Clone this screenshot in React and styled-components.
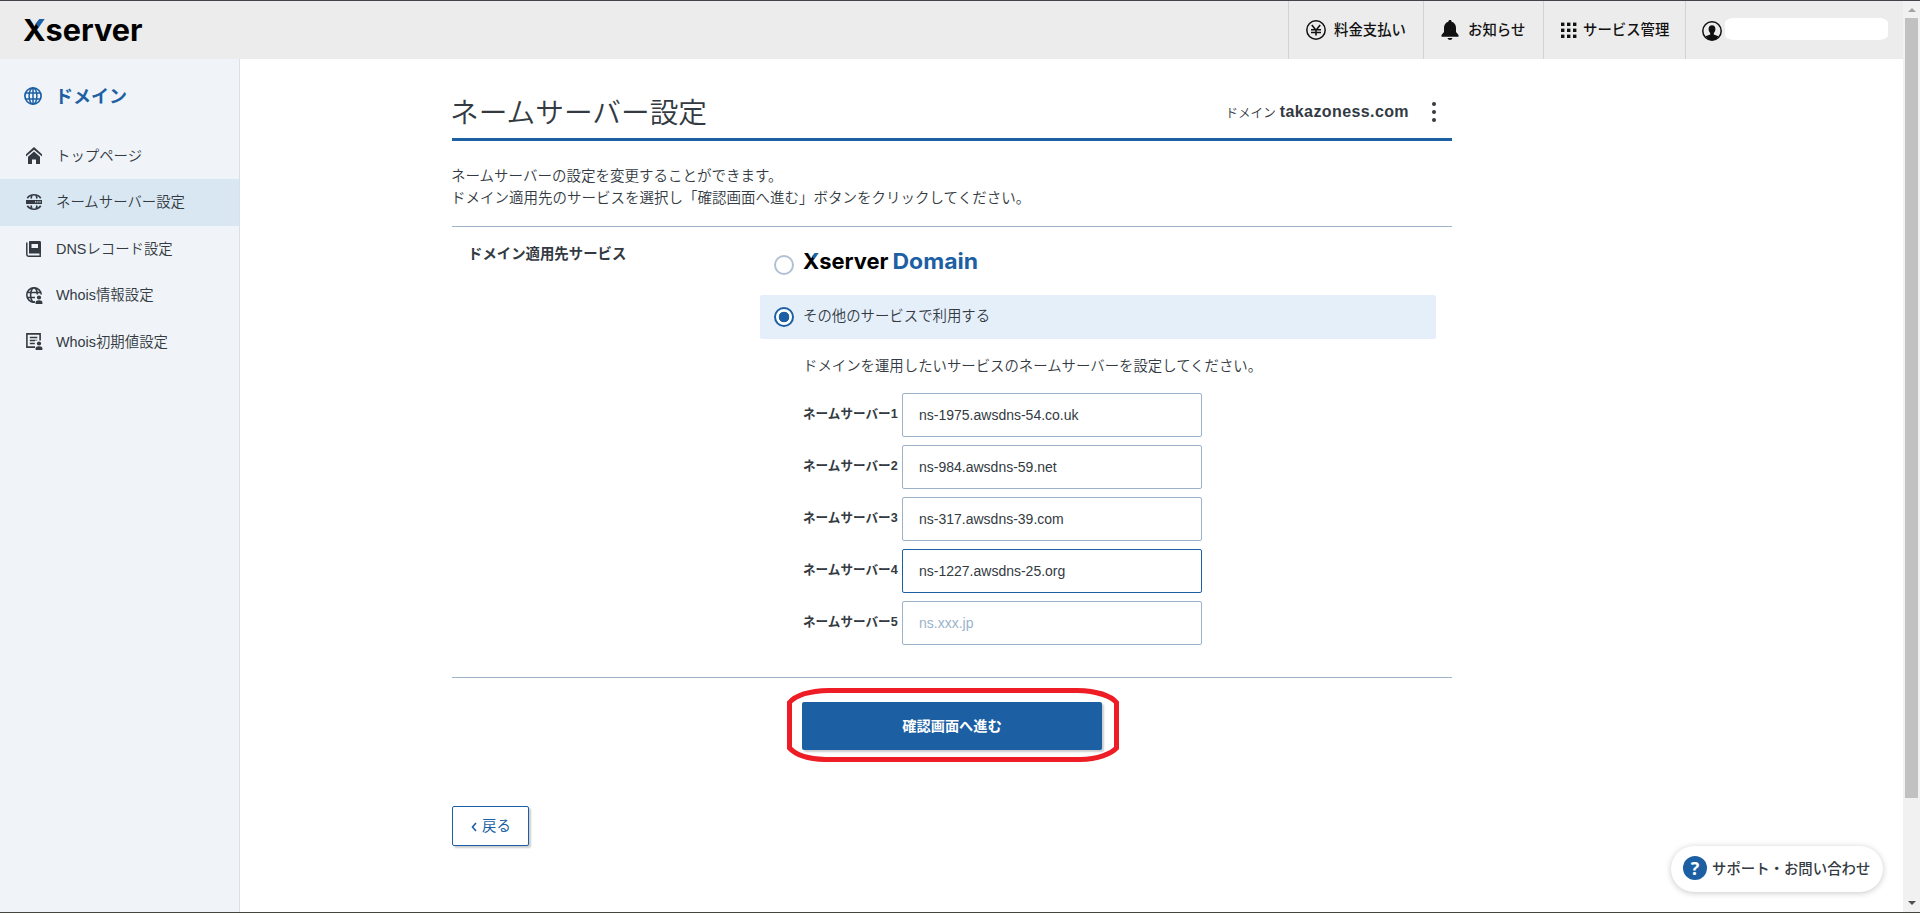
import React, { useState } from 'react';
import styled, { createGlobalStyle, css } from 'styled-components';

const GlobalStyle = createGlobalStyle`
  * {
    box-sizing: border-box;
  }

  body {
    margin: 0;
    height: 913px;
    overflow: hidden;
    background: #fff;
    color: #333a42;
    font-family: 'Liberation Sans', 'Noto Sans CJK JP', sans-serif;
    font-size: 14.4px;
    font-weight: 350;
  }
`;

const YenIcon = () => (
  <svg width="20" height="20" viewBox="0 0 20 20" fill="none" stroke="#111">
    <circle cx="10" cy="10" r="9.2" strokeWidth="1.5" />
    <path d="M5.8 5l4.2 5.2L14.2 5M10 10v5.6M5 9.7h10M5 12.5h10" strokeWidth="1.6" />
  </svg>
);

const BellIcon = () => (
  <svg width="18" height="20" viewBox="0 0 18 20" fill="#111">
    <path d="M9 0c1 0 1.6.7 1.6 1.7C13.400 2.500 15 4.800 15 7.600V12l2.500 3v1.700H.5V15L3 12V7.600c0-2.800 1.600-5.100 4.400-5.900C7.400.7 8 0 9 0z" />
    <path d="M6.500 18h5c-.4 1.200-1.300 1.900-2.500 1.900S6.900 19.200 6.500 18z" />
  </svg>
);

const GridIcon = () => (
  <svg width="16" height="16" viewBox="0 0 16 16" fill="#111">
    {[1, 7, 13].map((y) =>
      [0, 6, 12].map((x) => <rect key={`${x}-${y}`} x={x} y={y - 0.4} width="3.4" height="3.4" />)
    )}
  </svg>
);

const UserIcon = () => (
  <svg width="20" height="22" viewBox="0 -2 20 22">
    <circle cx="10" cy="10" r="9.2" fill="none" stroke="#111" strokeWidth="1.5" />
    <path
      d="M10 4.300c2.200 0 3.400 1.500 3.400 3.700 0 1.700-.7 3.100-1.600 3.900v1.500l4.600 1.900C15 17.800 12.700 19.300 10 19.300S5 17.800 3.600 15.300l4.600-1.900v-1.500C7.300 11.100 6.600 9.700 6.600 8c0-2.200 1.200-3.700 3.400-3.700z"
      fill="#111"
    />
  </svg>
);

const GlobeIcon = () => (
  <svg width="18" height="18" viewBox="0 0 18 18" fill="none" stroke="#1c5fa3" strokeWidth="1.5">
    <circle cx="9" cy="9" r="8.100" strokeWidth="1.700" />
    <ellipse cx="9" cy="9" rx="3.900" ry="8.100" />
    <path d="M9 1v16M1.800 6h14.400M1.800 12h14.400" />
  </svg>
);

const HomeIcon = () => (
  <svg width="16" height="17" viewBox="0 0 16 17" fill="#333a42">
    <path d="M8 0l8 7.200v2.400L8 2.800 0 9.600V7.200z" />
    <path d="M8 4.600l6 5.200V17h-4v-4.500H6V17H2V9.800z" />
  </svg>
);

const NameServerIcon = () => (
  <svg width="16" height="16" viewBox="0 0 16 16">
    <path
      d="M1.300 4.200C2.700 2 5.100.8 8 .8s5.300 1.200 6.700 3.400M1.300 11.800C2.700 14 5.100 15.200 8 15.200s5.300-1.200 6.700-3.400M5 4.500L6 .9M11 4.500L10 .9M5 11.500l1 3.600M11 11.500l-1 3.600"
      fill="none"
      stroke="#333a42"
      strokeWidth="1.600"
    />
    <path d="M0 6h16v4H0z" fill="#333a42" />
    <path d="M9 7.300h1.300v1.300H9zM11.200 7.300h1.300v1.300h-1.300zM13.400 7.300h1.300v1.300h-1.300z" fill="#dae7f2" />
  </svg>
);

const RecordIcon = () => (
  <svg width="16" height="16" viewBox="0 0 16 16">
    <path d="M4 0h9.500C14.500 0 15 .6 15 1.500V12.500H3V1c0-.6.400-1 1-1z" fill="#333a42" />
    <path d="M5.500 3h6.500v4H5.500z" fill="#f0f4f8" />
    <path d="M.8 1.500v12c0 1 .6 1.700 1.700 1.700H14.200V12" fill="none" stroke="#333a42" strokeWidth="1.500" />
  </svg>
);

const Person = () => (
  <>
    <path d="M9 7.500h8V17H9z" fill="#f0f4f8" />
    <circle cx="13" cy="10.500" r="2.100" fill="#333a42" />
    <path d="M9.600 17v-1.500c0-1.500 1.300-2.300 3.400-2.300s3.400.8 3.400 2.300V17z" fill="#333a42" />
  </>
);

const WhoisIcon = () => (
  <svg width="17" height="17" viewBox="0 0 17 17">
    <g fill="none" stroke="#333a42" strokeWidth="1.600">
      <circle cx="8" cy="8" r="7.200" />
      <ellipse cx="8" cy="8" rx="3.400" ry="7.200" />
      <path d="M1.300 5.500h13.400M1.300 10.500h13.400" />
    </g>
    <Person />
  </svg>
);

const WhoisDefaultIcon = () => (
  <svg width="17" height="17" viewBox="0 0 17 17">
    <path
      d="M.9.900h13.200v13.200H.9zM3.800 4.500h7.500M3.800 7.500h7.500M3.800 10.500h5"
      fill="none"
      stroke="#333a42"
      strokeWidth="1.600"
    />
    <Person />
  </svg>
);

const XserverLogo = () => (
  <LogoSvg width="120" height="26" viewBox="0 0 120 26">
    <text x="-1" y="23" fontSize="30" textLength="119.500" lengthAdjust="spacingAndGlyphs">Xserver</text>
    <path d="M14.500 0h7l-.6 1.200-5.300 7.600-4-4.200z" fill="#ececec" />
    <path d="M11.600 5.400L15.300 1.100h5.400l-6 8.300z" fill="#1c5fa3" />
  </LogoSvg>
);

const DomainLogo = () => (
  <LogoSvg width="176" height="20" viewBox="0 0 176 20">
    <text x="-1" y="16" fontSize="22" textLength="85.500" lengthAdjust="spacingAndGlyphs">Xserver</text>
    <path d="M10.200-.5h5.200l-.7.800-3.800 5.500-2.900-3z" fill="#fff" />
    <path d="M8 3.300L10.700.1h3.900l-4.300 6.100z" fill="#1c5fa3" />
    <text x="88.500" y="16" fontSize="22" fill="#1c5fa3" textLength="85.500" lengthAdjust="spacingAndGlyphs">Domain</text>
  </LogoSvg>
);

const menuItems = [
  { label: 'トップページ', icon: <HomeIcon /> },
  { label: 'ネームサーバー設定', icon: <NameServerIcon />, active: true },
  { label: 'DNSレコード設定', icon: <RecordIcon /> },
  { label: 'Whois情報設定', icon: <WhoisIcon /> },
  { label: 'Whois初期値設定', icon: <WhoisDefaultIcon /> },
];

const App = () => {
  const [service, setService] = useState('other');
  const [servers, setServers] = useState([
    'ns-1975.awsdns-54.co.uk',
    'ns-984.awsdns-59.net',
    'ns-317.awsdns-39.com',
    'ns-1227.awsdns-25.org',
    '',
  ]);

  const handleChange = (index, value) => {
    setServers(servers.map((item, i) => (i === index ? value : item)));
  };

  return (
    <Window lang="ja">
      <GlobalStyle />
      <Page>
        <Header>
          <XserverLogo />
          <HeaderNav>
            <HeaderItem $width="135px" $gap="8px"><YenIcon /><span>料金支払い</span></HeaderItem>
            <HeaderItem $width="120px" $gap="9px"><BellIcon /><span>お知らせ</span></HeaderItem>
            <HeaderItem $width="142px" $gap="6px"><GridIcon /><span>サービス管理</span></HeaderItem>
            <HeaderItem $width="218px" $gap="3px" $left="16px"><UserIcon /><AccountName /></HeaderItem>
          </HeaderNav>
        </Header>
        <Body>
          <Sidebar>
            <SidebarTitle><GlobeIcon /><span>ドメイン</span></SidebarTitle>
            <ul>
              {menuItems.map((item) => (
                <MenuItem key={item.label} $active={item.active}>
                  <MenuIcon>{item.icon}</MenuIcon>
                  <MenuLabel>{item.label}</MenuLabel>
                </MenuItem>
              ))}
            </ul>
          </Sidebar>
          <Main>
            <TitleRow>
              <h1>ネームサーバー設定</h1>
              <DomainInfo>
                <span>ドメイン</span>
                <strong>takazoness.com</strong>
                <MoreButton aria-label="menu"><i /><i /><i /></MoreButton>
              </DomainInfo>
            </TitleRow>
            <Lead>
              ネームサーバーの設定を変更することができます。<br />
              ドメイン適用先のサービスを選択し「確認画面へ進む」ボタンをクリックしてください。
            </Lead>
            <FormRow>
              <FormTitle>ドメイン適用先サービス</FormTitle>
              <FormBody>
                <LogoOption onClick={() => setService('xserver')}>
                  <Radio $checked={service === 'xserver'} />
                  <DomainLogo />
                </LogoOption>
                <OtherOption onClick={() => setService('other')}>
                  <Radio $checked={service === 'other'} />
                  <span>その他のサービスで利用する</span>
                </OtherOption>
                <Note>ドメインを運用したいサービスのネームサーバーを設定してください。</Note>
                <ServerList>
                  {servers.map((value, index) => (
                    <ServerRow key={index}>
                      <span>ネームサーバー{index + 1}</span>
                      <ServerInput
                        value={value}
                        placeholder="ns.xxx.jp"
                        $focused={index === 3}
                        onChange={(e) => handleChange(index, e.target.value)}
                      />
                    </ServerRow>
                  ))}
                </ServerList>
              </FormBody>
            </FormRow>
            <SubmitArea>
              <SubmitButton>確認画面へ進む</SubmitButton>
              <Highlight viewBox="0 0 332 74">
                <path d="M42 2.500H290C310 3 324 8 329.500 14.500V60C324 66 311 71 293 71.500H38C20 71 8 66 2.500 60V14.500C8 8 21 3 42 2.500z" />
              </Highlight>
            </SubmitArea>
            <BackButton>
              <svg width="6" height="10" viewBox="0 0 6 10">
                <path d="M5 1L1.500 5 5 9" fill="none" stroke="#1c5fa3" strokeWidth="1.600" />
              </svg>
              戻る
            </BackButton>
          </Main>
        </Body>
      </Page>
      <ScrollBar>
        <Arrow $up />
        <Thumb />
        <Arrow />
      </ScrollBar>
      <SupportButton>
        <SupportMark>?</SupportMark>
        <SupportLabel>サポート・お問い合わせ</SupportLabel>
      </SupportButton>
    </Window>
  );
};

const Window = styled.div`
  display: flex;
  position: relative;
  height: 913px;
  border-top: 1px solid #45434a;
  border-bottom: 1px solid #45473f;
`;

const Page = styled.div`
  flex: 1;
  display: flex;
  flex-direction: column;
`;

const LogoSvg = styled.svg`
  display: block;
  overflow: visible;
  font-family: Inter, sans-serif;
  font-weight: 700;
`;

const Header = styled.header`
  display: flex;
  justify-content: space-between;
  height: 58px;
  padding-left: 24px;
  background: #ececec;

  > svg {
    margin-top: 17px;
  }
`;

const HeaderNav = styled.nav`
  display: flex;
`;

const HeaderItem = styled.div`
  display: flex;
  align-items: center;
  gap: ${({ $gap }) => $gap};
  width: ${({ $width }) => $width};
  padding-left: ${({ $left }) => $left || '17px'};
  border-left: 1px solid #d2d2d2;
  color: #111;
  font-size: 14.4px;
  font-weight: 500;
  white-space: nowrap;

  span {
    padding-bottom: 3px;
  }
`;

const AccountName = styled.div`
  width: 163px;
  height: 22px;
  margin-bottom: 2px;
  border-radius: 9px / 5px;
  background: #fff;
`;

const Body = styled.div`
  flex: 1;
  display: flex;
`;

const Sidebar = styled.aside`
  width: 240px;
  border-right: 1px solid #d8e0e8;
  background: #f0f4f8;

  ul {
    margin: 0;
    padding: 0;
    list-style: none;
  }
`;

const SidebarTitle = styled.div`
  display: flex;
  align-items: center;
  gap: 13px;
  height: 73.5px;
  padding: 1px 0 0 24px;
  color: #1c5fa3;
  font-size: 18px;
  font-weight: 700;

  span {
    padding-bottom: 2px;
  }
`;

const MenuItem = styled.li`
  display: flex;
  align-items: center;
  height: 46.5px;
  padding-left: 26px;
  font-size: 14.4px;
  ${({ $active }) => $active && css`
    background: #d9e7f3;
  `}
`;

const MenuIcon = styled.span`
  display: flex;
  width: 30px;
`;

const MenuLabel = styled.span`
  padding-bottom: 3px;
`;

const Main = styled.main`
  width: 1000px;
  margin-left: 212px;
`;

const TitleRow = styled.div`
  display: flex;
  align-items: center;
  justify-content: space-between;
  height: 82px;
  padding-top: 24px;
  border-bottom: 3px solid #1c5fa3;

  h1 {
    margin: 0 0 0 -2px;
    font-size: 28.7px;
    font-weight: 350;
  }
`;

const DomainInfo = styled.div`
  display: flex;
  align-items: center;

  span {
    margin: 2px 4px 0 0;
    font-size: 12.6px;
  }

  strong {
    margin-top: 3px;
    font-size: 16px;
    font-weight: 700;
    letter-spacing: 0.4px;
  }
`;

const MoreButton = styled.button`
  display: flex;
  flex-direction: column;
  gap: 4px;
  margin: 3px 16px 0 23px;
  padding: 0;
  border: 0;
  background: none;

  i {
    width: 4px;
    height: 4px;
    border-radius: 50%;
    background: #333a42;
  }
`;

const Lead = styled.p`
  margin: 24px 0 0 -1px;
  font-size: 14.5px;
  line-height: 22px;
`;

const FormRow = styled.section`
  display: flex;
  height: 452px;
  margin-top: 17px;
  padding: 0 16px;
  border-top: 1px solid #9bb2ca;
  border-bottom: 1px solid #9bb2ca;
`;

const FormTitle = styled.div`
  width: 292px;
  padding-top: 17px;
  font-weight: 700;
  line-height: 21px;
`;

const FormBody = styled.div`
  flex: 1;
`;

const LogoOption = styled.label`
  display: flex;
  align-items: flex-start;
  gap: 10px;
  height: 68px;
  padding: 28px 0 0 14px;

  svg {
    margin-top: -2px;
  }
`;

const OtherOption = styled.label`
  display: flex;
  align-items: center;
  gap: 9px;
  height: 44px;
  padding-left: 14px;
  border-radius: 2px;
  background: #e5effa;

  span {
    margin-top: -5px;
  }
`;

const Radio = styled.i`
  width: 20px;
  height: 20px;
  border: 2px solid ${({ $checked }) => ($checked ? '#1c5fa3' : '#afc1d4')};
  border-radius: 50%;
  background: ${({ $checked }) => ($checked ? 'radial-gradient(circle, #1c5fa3 5px, #fff 5.6px)' : '#fff')};
`;

const Note = styled.p`
  margin: 16px 0 16px 43px;
  line-height: 22px;
`;

const ServerList = styled.div`
  display: flex;
  flex-direction: column;
  gap: 8px;
  padding-left: 43px;
`;

const ServerRow = styled.label`
  display: flex;
  align-items: center;

  span {
    width: 99px;
    margin-top: -5px;
    font-size: 12.6px;
    font-weight: 700;
    white-space: nowrap;
  }
`;

const ServerInput = styled.input`
  width: 300px;
  height: 44px;
  padding: 0 16px;
  border: 1px solid ${({ $focused }) => ($focused ? '#1c5fa3' : '#9bb2ca')};
  border-radius: 2px;
  outline: none;
  color: #333a42;
  font-family: 'Liberation Sans', 'Noto Sans CJK JP', sans-serif;
  font-size: 14px;

  &::placeholder {
    color: #9bb2ca;
  }
`;

const SubmitArea = styled.div`
  position: relative;
  width: 300px;
  margin: 24px 0 0 350px;
`;

const SubmitButton = styled.button`
  display: block;
  width: 300px;
  height: 48px;
  padding: 0 0 2px;
  border: 0;
  border-radius: 2px;
  background: #1c5fa3;
  box-shadow: 2px 2px 2px rgba(0, 0, 0, 0.2);
  color: #fff;
  font-family: 'Liberation Sans', 'Noto Sans CJK JP', sans-serif;
  font-size: 14.2px;
  font-weight: 700;
`;

/* hand-drawn ring laid over the submit button */
const Highlight = styled.svg`
  position: absolute;
  top: -14px;
  left: -15px;
  width: 332px;
  height: 74px;
  fill: none;
  stroke: #ee1c24;
  stroke-width: 5;
  pointer-events: none;
`;

const BackButton = styled.button`
  display: flex;
  align-items: center;
  justify-content: center;
  gap: 5px;
  width: 77px;
  height: 40px;
  margin-top: 56px;
  padding: 0 0 4px 1px;
  border: 1px solid #1c5fa3;
  border-radius: 2px;
  background: #fff;
  box-shadow: 2px 2px 2px rgba(0, 0, 0, 0.2);
  color: #1c5fa3;
  font-family: 'Liberation Sans', 'Noto Sans CJK JP', sans-serif;
  font-size: 14.4px;

  svg {
    margin-top: 5px;
  }
`;

const ScrollBar = styled.div`
  display: flex;
  flex-direction: column;
  align-items: center;
  width: 17px;
  padding: 7px 0;
  background: #f1f1f1;
`;

const Thumb = styled.div`
  width: 13px;
  height: 780px;
  margin: 6px 0 auto;
  background: #c1c1c1;
`;

const Arrow = styled.i`
  border: 4px solid transparent;
  ${({ $up }) => ($up
    ? css`
      border-top: 0;
      border-bottom-color: #a3a3a3;
    `
    : css`
      border-bottom: 0;
      border-top-color: #505050;
    `)}
`;

const SupportButton = styled.div`
  position: absolute;
  right: 37px;
  bottom: 20px;
  display: flex;
  align-items: center;
  gap: 5px;
  width: 212px;
  height: 46px;
  padding: 0 0 2px 12px;
  border-radius: 23px;
  background: #fff;
  box-shadow: 0 1px 6px rgba(0, 0, 0, 0.22);
  font-size: 14.4px;
  font-weight: 500;
  white-space: nowrap;
`;

const SupportLabel = styled.span`
  padding-bottom: 2px;
`;

const SupportMark = styled.span`
  display: flex;
  align-items: center;
  justify-content: center;
  width: 24px;
  height: 24px;
  border-radius: 50%;
  background: #1c5fa3;
  color: #fff;
  font-family: 'Open Sans', sans-serif;
  font-size: 18px;
  font-weight: 700;
`;

export default App;
